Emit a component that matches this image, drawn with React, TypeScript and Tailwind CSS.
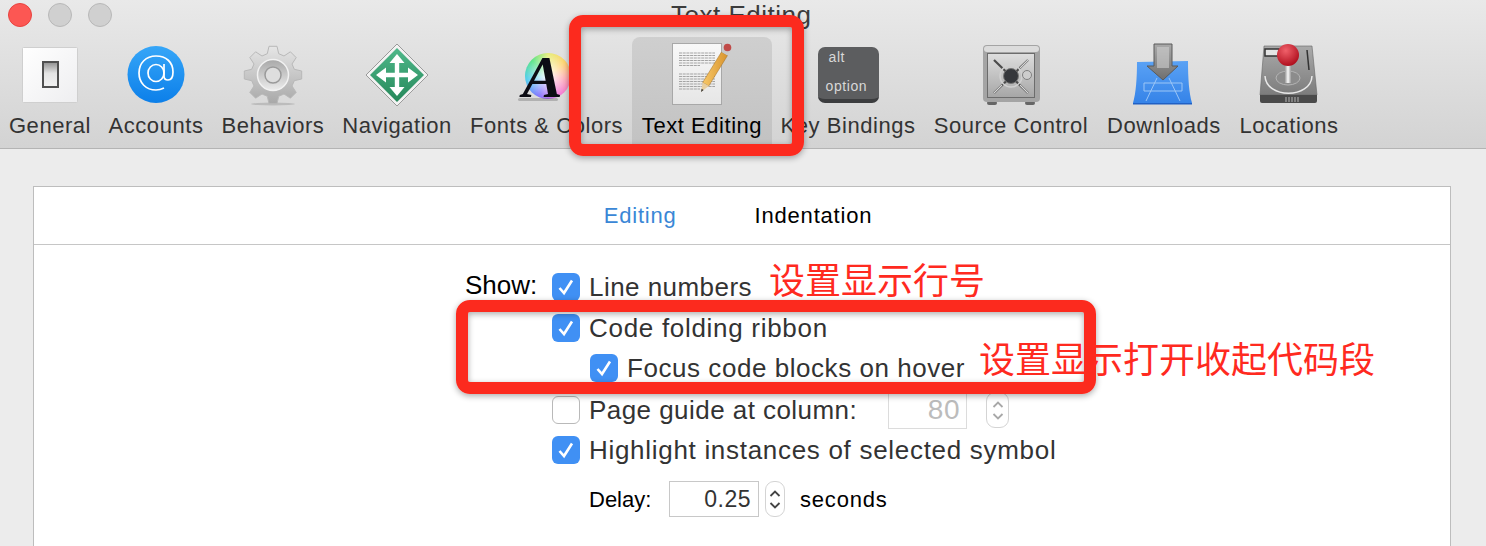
import type { ReactNode } from "react";

// 8 teeth gear, outline is worked out once so the path stays short in the JSX
const gearPath = (() => {
  const pts: string[] = [];
  for (let i = 0; i < 8; i++) {
    const a = (i * Math.PI) / 4 - Math.PI / 2;
    const at = (r: number, d: number) =>
      `${(32 + r * Math.cos(a + d)).toFixed(1)} ${(32 + r * Math.sin(a + d)).toFixed(1)}`;
    pts.push(at(22, -0.26), at(29, -0.14), at(29, 0.14), at(22, 0.26));
  }
  return `M${pts.join("L")}Z`;
})();

function Icon({ children }: { children: ReactNode }) {
  return (
    <svg viewBox="0 0 64 64" className="h-[64px] w-[64px] shrink-0 overflow-visible">
      {children}
    </svg>
  );
}

function GeneralIcon() {
  return (
    <Icon>
      <defs>
        <linearGradient id="sw" x1="0" y1="0" x2="0" y2="1">
          <stop offset="0" stopColor="#8e8e8e" />
          <stop offset="0.45" stopColor="#e4e4e4" />
          <stop offset="1" stopColor="#f2f2f2" />
        </linearGradient>
        <linearGradient id="plate" x1="0" y1="0" x2="1" y2="1">
          <stop offset="0" stopColor="#ffffff" />
          <stop offset="1" stopColor="#eeeef0" />
        </linearGradient>
      </defs>
      <rect x="4.500" y="4.500" width="55" height="55" rx="1" fill="url(#plate)" stroke="#cfcfcf" />
      <rect x="25" y="19" width="15" height="25" fill="url(#sw)" stroke="#505050" strokeWidth="2" />
    </Icon>
  );
}

function AccountsIcon() {
  return (
    <Icon>
      <defs>
        <linearGradient id="acc" x1="0" y1="0" x2="0" y2="1">
          <stop offset="0" stopColor="#36a6f8" />
          <stop offset="1" stopColor="#0c7fe9" />
        </linearGradient>
      </defs>
      <circle cx="32" cy="31.500" r="28.500" fill="url(#acc)" />
      <ellipse cx="32" cy="30" rx="8" ry="8.500" fill="none" stroke="#fff" strokeWidth="1.700" />
      <path
        d="M40 21v12q0 4 4 4 5 0 5-8c0-10-7-16-17-16-10 0-17 7-17 17s7 17 17 17c3 0 6-1 8-2"
        fill="none"
        stroke="#fff"
        strokeWidth="1.700"
      />
    </Icon>
  );
}

function BehaviorsIcon() {
  return (
    <Icon>
      <defs>
        <linearGradient id="gear" x1="0" y1="0" x2="0" y2="1">
          <stop offset="0" stopColor="#e6e6e6" />
          <stop offset="1" stopColor="#a8a8a8" />
        </linearGradient>
        <linearGradient id="gearIn" x1="0" y1="0" x2="0" y2="1">
          <stop offset="0" stopColor="#a8a8a8" />
          <stop offset="1" stopColor="#ececec" />
        </linearGradient>
      </defs>
      <ellipse cx="32" cy="61" rx="22" ry="1.500" fill="#bcbcbc" />
      <path d={gearPath} fill="url(#gear)" stroke="#b8b8b8" strokeWidth="1" />
      <circle cx="32" cy="32" r="15.500" fill="url(#gearIn)" stroke="#f2f2f2" strokeWidth="1.500" />
      <circle cx="32" cy="32" r="8" fill="#dedede" stroke="#9a9a9a" strokeWidth="1.500" />
    </Icon>
  );
}

function NavigationIcon() {
  return (
    <Icon>
      <defs>
        <linearGradient id="nav" x1="0" y1="0" x2="0" y2="1">
          <stop offset="0" stopColor="#4fb88a" />
          <stop offset="1" stopColor="#26885a" />
        </linearGradient>
      </defs>
      <path d="M32 1 63 32 32 63 1 32Z" fill="#f2f2f2" stroke="#9a9a9a" />
      <path d="M32 5 59 32 32 59 5 32Z" fill="url(#nav)" />
      <path
        d="M32 11 39.500 20H34.200V29.800H43V24.500L53 32 43 39.500V34.200H34.200V44H39.500L32 53 24.500 44H29.800V34.200H21V39.500L11 32 21 24.500V29.800H29.800V20H24.500Z"
        fill="#fff"
      />
    </Icon>
  );
}

function FontsIcon() {
  return (
    <div className="relative h-[64px] w-[64px] shrink-0">
      <div className="absolute left-[10px] top-[10px] h-[46px] w-[46px] rounded-full [background:radial-gradient(circle,#ffffff_0%,#ffffff00_75%),conic-gradient(#e4ec70,#ffcf5e_50deg,#ff8fa0_100deg,#f070d8_150deg,#7868ff_205deg,#40c8ee_260deg,#4fe27c_315deg,#e4ec70)]" />
      <div className="absolute bottom-[6px] left-[3px] h-[3px] w-[40px] rounded-full bg-[#00000030]" />
      <span className="absolute left-[8px] top-[3px] font-['Liberation_Serif',serif] text-[60px] font-bold italic leading-[62px] text-[#0c0c14]">
        A
      </span>
    </div>
  );
}

function TextEditingIcon() {
  const lines = [10, 12.500, 15, 17.500, 20, 22.500, 31, 33.500, 36, 38.500, 41, 43.500, 46];
  return (
    <Icon>
      <defs>
        <linearGradient id="pen" x1="0" y1="0" x2="1" y2="0">
          <stop offset="0" stopColor="#f8c868" />
          <stop offset="1" stopColor="#d8942e" />
        </linearGradient>
        <linearGradient id="sheet" x1="0" y1="0" x2="0" y2="1">
          <stop offset="0" stopColor="#f8f8f8" />
          <stop offset="1" stopColor="#e6e6e6" />
        </linearGradient>
      </defs>
      <rect x="2.500" y="0.500" width="49" height="61" fill="url(#sheet)" stroke="#a8a8a8" />
      {lines.map((y, i) => (
        <path
          key={y}
          d={`M9 ${y}H${i === 5 || i === 12 ? 30 : 45}`}
          stroke="#a4a4a4"
          strokeWidth="1.100"
          strokeDasharray="3 0.700"
        />
      ))}
      <path d="M32.700 39.500 51.500 8.900 57.500 12.500 38.700 43.100Z" fill="url(#pen)" stroke="#a06c20" strokeWidth="0.500" />
      <path d="M32.700 39.500 38.700 43.100 31 49Z" fill="#e9cfa0" />
      <path d="M31.600 45.800 33.600 47 31 49Z" fill="#333" />
      <path d="M51.500 8.900 53.600 5.500 59.600 9.100 57.500 12.500Z" fill="#c9c9c9" />
      <circle cx="57.500" cy="4.500" r="3.800" fill="#c04a48" />
    </Icon>
  );
}

function KeyIcon() {
  return (
    <div className="flex h-[64px] w-[64px] shrink-0 items-center justify-center">
      <div className="flex h-[56px] w-[61px] flex-col justify-between rounded-[7px] border-b-[4px] border-[#3c3d3f] bg-[#5c5d5f] px-[8px] pb-[4px] pt-[1px] text-[14px] leading-[18px] tracking-[0.6px] text-[#d8d8d8]">
        <span className="pl-[3px]">alt</span>
        <span>option</span>
      </div>
    </div>
  );
}

function SafeIcon() {
  return (
    <Icon>
      <defs>
        <linearGradient id="safe" x1="0" y1="0" x2="0" y2="1">
          <stop offset="0" stopColor="#dedede" />
          <stop offset="1" stopColor="#a6a6a6" />
        </linearGradient>
      </defs>
      <rect x="8" y="58" width="10" height="4" rx="2" fill="#666" />
      <rect x="46" y="58" width="10" height="4" rx="2" fill="#666" />
      <rect x="4" y="2" width="57" height="57" rx="4" fill="#a4a4a4" />
      <rect x="5" y="3" width="55" height="6" rx="3" fill="#dcdcdc" />
      <rect x="8.500" y="10.500" width="47" height="44" fill="url(#safe)" stroke="#6c6c6c" />
      <path d="M15 17 49 50M49 17 15 50" stroke="#4b4b4b" strokeWidth="2.200" />
      <path d="M41 25 49 17M15 50 23 42M41 42 49 50" stroke="#d6d6d6" strokeWidth="1.200" />
      <circle cx="32" cy="33" r="11" fill="none" stroke="#d0d0d0" strokeWidth="1.500" />
      <circle cx="32" cy="33" r="7.500" fill="#35373b" stroke="#777" />
      <circle cx="48" cy="32" r="4.500" fill="#cdcdcd" stroke="#808080" />
    </Icon>
  );
}

function DownloadsIcon() {
  return (
    <Icon>
      <defs>
        <linearGradient id="blue" x1="0" y1="0" x2="0" y2="1">
          <stop offset="0" stopColor="#5aa2f5" />
          <stop offset="1" stopColor="#3583e8" />
        </linearGradient>
        <linearGradient id="arrow" x1="0" y1="0" x2="0" y2="1">
          <stop offset="0" stopColor="#a9a9a9" />
          <stop offset="1" stopColor="#6f6f6f" />
        </linearGradient>
      </defs>
      <path d="M5 19 56 18C56 35 57 50 60 60H1C4 50 5 35 5 19Z" fill="url(#blue)" />
      <path d="M1 60H60V61.500H1Z" fill="#2060c4" />
      <path d="M12 40H50V48H12ZM25 35 14 58M37 35 48 58" fill="none" stroke="#9cc6f6" strokeWidth="1" />
      <path d="M22 1H40V23H46L31 37 15 23H22Z" fill="url(#arrow)" stroke="#5a5a5a" />
      <path d="M25 4H37V25H25Z" fill="#cfcfcf" opacity="0.600" />
    </Icon>
  );
}

function LocationsIcon() {
  return (
    <Icon>
      <defs>
        <linearGradient id="disk" x1="0" y1="0" x2="0" y2="1">
          <stop offset="0" stopColor="#aaaaaa" />
          <stop offset="1" stopColor="#7c7c7c" />
        </linearGradient>
        <radialGradient id="ball" cx="0.400" cy="0.300" r="0.700">
          <stop offset="0" stopColor="#f0606a" />
          <stop offset="1" stopColor="#b00f1e" />
        </radialGradient>
        <linearGradient id="stick" x1="0" y1="0" x2="1" y2="0">
          <stop offset="0" stopColor="#9a9a9a" />
          <stop offset="0.500" stopColor="#fafafa" />
          <stop offset="1" stopColor="#9a9a9a" />
        </linearGradient>
      </defs>
      <path d="M7 3H55L60 52H3Z" fill="url(#disk)" stroke="#666" strokeWidth="0.600" />
      <path d="M3 52H60V58Q60 60 58 60H5Q3 60 3 58Z" fill="#4a4a4a" />
      <path d="M8 33C9 56 54 56 55 33" fill="none" stroke="#e8e8e8" strokeWidth="1.500" />
      <ellipse cx="31" cy="35" rx="12" ry="7" fill="#8c8c8c" stroke="#b4b4b4" />
      <path d="M8 6H22V13H8Z" fill="#e4e4e4" stroke="#333" strokeWidth="1.500" />
      <path d="M50 7 52 27" stroke="#333" strokeWidth="1.500" />
      <path d="M28 20H34V40H28Z" fill="url(#stick)" />
      <circle cx="31" cy="12" r="11" fill="url(#ball)" />
      <path d="M29 54V59M32 54V59M35 54V59M38 54V59M41 54V59" stroke="#b4b4b4" />
    </Icon>
  );
}

const toolbarItems = [
  { label: "General", icon: <GeneralIcon />, cls: "w-[80px]" },
  { label: "Accounts", icon: <AccountsIcon />, cls: "w-[96px]" },
  { label: "Behaviors", icon: <BehaviorsIcon />, cls: "w-[102px]" },
  { label: "Navigation", icon: <NavigationIcon />, cls: "w-[110px]" },
  { label: "Fonts & Colors", icon: <FontsIcon />, cls: "w-[153px]" },
  {
    label: "Text Editing",
    icon: <TextEditingIcon />,
    cls: "w-[140px] mx-[-9px] rounded-t-[8px] bg-gradient-to-b from-[#cfcfcf] to-[#c2c2c2] !text-black",
  },
  { label: "Key Bindings", icon: <KeyIcon />, cls: "w-[134px]" },
  { label: "Source Control", icon: <SafeIcon />, cls: "w-[156px]" },
  { label: "Downloads", icon: <DownloadsIcon />, cls: "w-[114px]" },
  { label: "Locations", icon: <LocationsIcon />, cls: "w-[100px]" },
];

function Check({ checked = true }: { checked?: boolean }) {
  if (!checked) {
    return <span className="h-[28px] w-[28px] shrink-0 rounded-[6px] border border-[#b9b9b9] bg-white" />;
  }
  return (
    <span className="flex h-[28px] w-[28px] shrink-0 items-center justify-center rounded-[6px] bg-[#4090f4]">
      <svg viewBox="0 0 28 28" className="h-[28px] w-[28px]">
        <path d="M7.500 15 12 20 20 7.500" fill="none" stroke="#fff" strokeWidth="2.600" />
      </svg>
    </span>
  );
}

function Stepper({ faded = false }: { faded?: boolean }) {
  const color = faded ? "#a8a8a8" : "#444";
  return (
    <span
      className={`flex h-[36px] shrink-0 flex-col items-center justify-center gap-[5px] rounded-[9px] border border-[#d4d4d4] bg-white ${
        faded ? "w-[23px]" : "w-[20px]"
      }`}
    >
      <svg viewBox="0 0 12 7" className="h-[7px] w-[12px]">
        <path d="M1.500 6 6 1.500 10.500 6" fill="none" stroke={color} strokeWidth="1.800" />
      </svg>
      <svg viewBox="0 0 12 7" className="h-[7px] w-[12px]">
        <path d="M1.500 1 6 5.500 10.500 1" fill="none" stroke={color} strokeWidth="1.800" />
      </svg>
    </span>
  );
}

function OptionRow({ className, checked, children }: { className?: string; checked?: boolean; children: ReactNode }) {
  return (
    <div className={`flex h-[40px] items-center ${className ?? ""}`}>
      <Check checked={checked} />
      <span className="ml-[9px] text-[26px] leading-[40px] text-[#333]">{children}</span>
    </div>
  );
}

export default function App() {
  return (
    <div className="relative flex h-[546px] w-[1486px] flex-col overflow-hidden bg-[#ececec] font-['Liberation_Sans',sans-serif]">
      <header className="h-[149px] shrink-0 border-b border-[#b4b4b4] bg-gradient-to-b from-[#e9e9e9] to-[#d3d3d3]">
        <div className="relative flex h-[37px] items-start gap-[16px] pl-[8px] pt-[3px]">
          <span className="h-[24px] w-[24px] rounded-full border border-[#e8433f] bg-[#fc5753]" />
          <span className="h-[24px] w-[24px] rounded-full border border-[#b8b8b8] bg-[#d0d0d0]" />
          <span className="h-[24px] w-[24px] rounded-full border border-[#b8b8b8] bg-[#d0d0d0]" />
          <span className="absolute left-[671px] top-0 text-[26px] leading-[30px] tracking-[0.5px] text-[#3c3c3c]">
            Text Editing
          </span>
        </div>
        <nav className="flex h-[111px] gap-[18px] pl-[10px]">
          {toolbarItems.map((item) => (
            <div key={item.label} className={`flex shrink-0 flex-col items-center pt-[6px] text-[#333] ${item.cls}`}>
              {item.icon}
              <span className="mt-[2px] whitespace-nowrap text-[22px] leading-[34px] tracking-[0.55px]">
                {item.label}
              </span>
            </div>
          ))}
        </nav>
      </header>

      <main className="flex-1 px-[33px] pt-[37px]">
        <section className="h-[400px] w-[1418px] border border-[#bdbdbd] bg-white">
          <div className="flex h-[58px] items-center justify-center gap-[78px] border-b border-[#c6c6c6] pr-[8px] text-[22px] tracking-[0.8px]">
            <span className="text-[#3a87d6]">Editing</span>
            <span className="text-black">Indentation</span>
          </div>
          <div className="flex flex-col pl-[518px] pt-[22px]">
            <div className="flex h-[40px] items-center">
              <span className="ml-[-87px] w-[87px] pb-[3px] text-[26px] text-black">Show:</span>
              <Check />
              <span className="ml-[9px] text-[26px] tracking-[0.45px] text-[#333]">Line numbers</span>
            </div>
            <OptionRow className="mt-[1px] tracking-[0.7px]">Code folding ribbon</OptionRow>
            <OptionRow className="pl-[38px] tracking-[0.55px]">Focus code blocks on hover</OptionRow>
            <div className="mt-[2px] flex h-[40px] items-center">
              <Check checked={false} />
              <span className="ml-[9px] w-[268px] whitespace-nowrap text-[26px] tracking-[0.45px] text-[#333]">
                Page guide at column:
              </span>
              <span className="ml-[31px] flex h-[37px] w-[79px] items-center justify-end border border-[#dcdcdc] bg-white pr-[6px] text-[28px] tracking-[0.5px] text-[#bcbcbc]">
                80
              </span>
              <span className="ml-[19px]">
                <Stepper faded />
              </span>
            </div>
            <OptionRow className="tracking-[0.7px]">Highlight instances of selected symbol</OptionRow>
            <div className="mt-[9px] flex h-[40px] items-center pl-[37px]">
              <span className="w-[80px] text-[22px] text-black">Delay:</span>
              <span className="flex h-[36px] w-[90px] items-center justify-end border border-[#c8c8c8] bg-white pr-[7px] text-[23px] tracking-[0.5px] text-[#333]">
                0.25
              </span>
              <span className="ml-[6px]">
                <Stepper />
              </span>
              <span className="ml-[15px] text-[22px] tracking-[0.8px] text-black">seconds</span>
            </div>
          </div>
        </section>
      </main>

      {/* annotations drawn over the screenshot */}
      <div className="absolute left-[569px] top-[15px] h-[141px] w-[235px] rounded-[14px] border-[12px] border-[#fc2a1e] shadow-[0_2px_6px_#00000055,inset_0_2px_6px_#00000055]" />
      <div className="absolute left-[456px] top-[300px] h-[94px] w-[640px] rounded-[14px] border-[12px] border-[#fc2a1e] shadow-[0_2px_6px_#00000055,inset_0_2px_6px_#00000055]" />
      <span className="absolute left-[769px] top-[252px] font-['Noto_Sans_CJK_SC',sans-serif] text-[36px] leading-[52px] text-[#ff2a1f]">
        设置显示行号
      </span>
      <span className="absolute left-[979px] top-[331px] font-['Noto_Sans_CJK_SC',sans-serif] text-[36px] leading-[52px] text-[#ff2a1f]">
        设置显示打开收起代码段
      </span>
    </div>
  );
}
